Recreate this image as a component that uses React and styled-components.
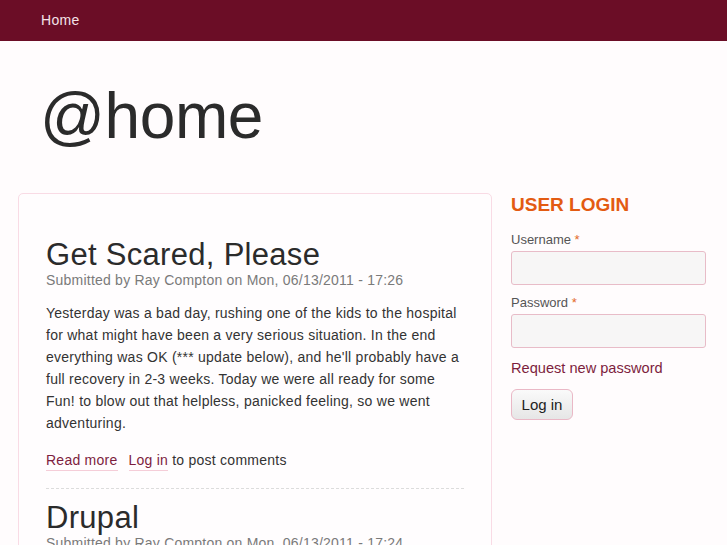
import React from 'react';
import styled, { createGlobalStyle } from 'styled-components';

const GlobalStyle = createGlobalStyle`
    html, body {
        margin: 0;
        padding: 0;
        background: #fffcfd;
        font-family: "Liberation Sans", Arial, sans-serif;
        color: #333;
    }
`;

const posts = [
    {
        title: 'Get Scared, Please',
        meta: 'Submitted by Ray Compton on Mon, 06/13/2011 - 17:26',
        body: "Yesterday was a bad day, rushing one of the kids to the hospital for what might have been a very serious situation. In the end everything was OK (*** update below), and he'll probably have a full recovery in 2-3 weeks. Today we were all ready for some Fun! to blow out that helpless, panicked feeling, so we went adventuring.",
    },
    {
        title: 'Drupal',
        meta: 'Submitted by Ray Compton on Mon, 06/13/2011 - 17:24',
        body: '',
    },
];

const App = () => {
    return (
        <>
            <GlobalStyle />
            <TopBar>
                <NavLink href="#">Home</NavLink>
            </TopBar>
            <Logo>@home</Logo>
            <Columns>
                <Card>
                    {posts.map((post, index) => (
                        <Post key={index} first={index === 0}>
                            <PostTitle>{post.title}</PostTitle>
                            <Meta>{post.meta}</Meta>
                            {post.body && (
                                <>
                                    <Body>{post.body}</Body>
                                    <Links>
                                        <TextLink href="#">Read more</TextLink>
                                        <TextLink href="#">Log in</TextLink>
                                        <span>to post comments</span>
                                    </Links>
                                </>
                            )}
                        </Post>
                    ))}
                </Card>
                <Sidebar>
                    <BlockTitle>User login</BlockTitle>
                    <Label>Username <Req>*</Req></Label>
                    <Input type="text" />
                    <Label>Password <Req>*</Req></Label>
                    <Input type="password" />
                    <Request href="#">Request new password</Request>
                    <Button>Log in</Button>
                </Sidebar>
            </Columns>
        </>
    );
};

const TopBar = styled.div`
    height: 41px;
    background: #6b0d26;
    display: flex;
    align-items: center;
    padding-left: 41px;
`;

const NavLink = styled.a`
    color: #f3e3e7;
    font-size: 14px;
    letter-spacing: 0.3px;
    text-decoration: none;
    margin-top: -1px;
`;

const Logo = styled.h1`
    margin: 43px 0 45px 40px;
    font-size: 64px;
    line-height: 64px;
    font-weight: normal;
    letter-spacing: -0.4px;
    color: #2b2b2b;
`;

const Columns = styled.div`
    display: flex;
    align-items: flex-start;
    gap: 19px;
    padding: 0 21px 0 18px;
`;

const Card = styled.div`
    width: 474px;
    box-sizing: border-box;
    min-height: 400px;
    background: #fffdfe;
    border: 1px solid #f9dbe5;
    border-radius: 5px;
    padding: 44px 27px 0 27px;
`;

const Post = styled.div`
    ${({ first }) => !first && `
        border-top: 1px dashed #dcdcdc;
        margin-top: 17px;
        padding-top: 12px;
    `}
`;

const PostTitle = styled.h2`
    margin: 0;
    font-size: 31px;
    line-height: 33px;
    font-weight: normal;
    letter-spacing: 0.3px;
    color: #2b2b2b;
`;

const Meta = styled.div`
    font-size: 14px;
    line-height: 18px;
    letter-spacing: 0.22px;
    color: #7a7a7a;
`;

const Body = styled.p`
    margin: 13px 0 0;
    font-size: 14px;
    line-height: 22px;
    letter-spacing: 0.25px;
    color: #333;
`;

const Links = styled.div`
    margin-top: 15px;
    font-size: 14px;
    line-height: 22px;
    letter-spacing: 0.25px;
    color: #333;
    display: flex;
    gap: 4px;
    align-items: baseline;
`;

const TextLink = styled.a`
    color: #7d1e3e;
    text-decoration: none;
    border-bottom: 1px solid #f5cdd8;
    margin-right: 7px;
    line-height: 20px;
    &:last-of-type {
        margin-right: 0;
    }
`;

const Sidebar = styled.div`
    width: 195px;
    display: flex;
    flex-direction: column;
    align-items: flex-start;
`;

const BlockTitle = styled.h2`
    margin: 0 0 15px;
    font-size: 19px;
    line-height: 24px;
    font-weight: bold;
    text-transform: uppercase;
    color: #e35b12;
`;

const Label = styled.label`
    font-size: 13px;
    line-height: 16px;
    color: #555;
    margin-bottom: 3px;
`;

const Req = styled.span`
    color: #e36a2a;
`;

const Input = styled.input`
    width: 195px;
    height: 34px;
    box-sizing: border-box;
    background: #f7f6f6;
    border: 1px solid #e8bcc8;
    border-radius: 3px;
    margin-bottom: 10px;
    outline: none;
`;

const Request = styled.a`
    font-size: 14.6px;
    line-height: 20px;
    color: #7d1e3e;
    text-decoration: none;
    margin-bottom: 11px;
`;

const Button = styled.button`
    width: 62px;
    height: 31px;
    font-family: "Liberation Sans", Arial, sans-serif;
    font-size: 15px;
    color: #222;
    background: linear-gradient(#fafafa, #e6e6e6);
    border: 1px solid #eab8c6;
    border-radius: 6px;
    cursor: pointer;
    padding: 0;
`;

export default App;
